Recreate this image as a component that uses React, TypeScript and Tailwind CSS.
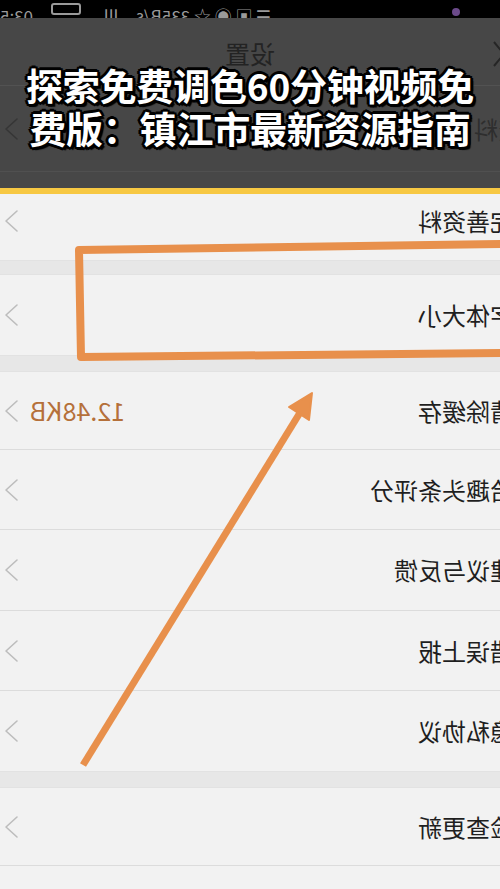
import React from "react"

const font = { fontFamily: '"Noto Sans CJK SC", "Noto Sans", sans-serif' }

// settings rows (the whole screenshot is mirrored, so each label is flipped)
const rows = [
  { label: "字体大小", h: "h-[80px]", bandAfter: true },
  { label: "清除缓存", h: "h-[78px]", value: "12.48KB" },
  { label: "给趣头条评分", h: "h-[80px]" },
  { label: "建议与反馈", h: "h-[81px]" },
  { label: "错误上报", h: "h-[80px]" },
  { label: "隐私协议", h: "h-[80px]", bandAfter: true },
  { label: "检查更新", h: "h-[78px]" },
]

function Chevron({ color = "#bdbdbd" }: { color?: string }) {
  return (
    <svg width="16" height="24" viewBox="0 0 16 24" className="shrink-0">
      <path d="M14 2 L3 12 L14 22" fill="none" stroke={color} strokeWidth="1.6" strokeLinecap="round" strokeLinejoin="round" />
    </svg>
  )
}

function Row({ label, h, value, last }: { label: string; h: string; value?: string; last?: boolean }) {
  return (
    <div className={`flex ${h} items-center overflow-hidden bg-[#f2f2f2] pl-[3px] ${last ? "" : "border-b border-[#dcdcdc]"}`}>
      <Chevron />
      {value && (
        <span className="ml-[11px] -scale-x-100 text-[25px] leading-none text-[#b5703a]" style={font}>
          {value}
        </span>
      )}
      <div className="flex-1" />
      <span className="-mr-[14px] -scale-x-100 whitespace-nowrap text-[24px] text-[#1f1f1f]" style={font}>
        {label}
      </span>
    </div>
  )
}

export default function App() {
  return (
    <div className="relative flex h-[889px] w-[500px] flex-col overflow-hidden bg-[#f2f2f2]" style={font}>
      {/* status bar */}
      <div className="flex h-[18px] items-end gap-[18px] overflow-hidden bg-black pl-0 text-[#9a9a9a]">
        <span className="-scale-x-100 translate-y-[6px] text-[17px] leading-none">03:5</span>
        <span className="mb-[3px] h-[12px] w-[30px] rounded-[3px] border-2 border-[#9a9a9a]" />
        <span className="-scale-x-100 translate-y-[6px] text-[17px] leading-none">lll.</span>
        <span className="-scale-x-100 translate-y-[6px] text-[17px] leading-none">☰ ▣ ◉ ☆ 335B/s</span>
        <div className="flex-1" />
        <span className="mb-[2px] mr-[40px] h-[8px] w-[8px] rounded-full bg-[#6b4a8a]" />
      </div>

      {/* darkened header */}
      <div className="relative h-[170px] bg-[#474747]">
        <div className="flex h-[68px] items-center justify-center border-b border-[#525252] pt-[4px]">
          <span className="-scale-x-100 text-[25px] text-[#232323]">设置</span>
        </div>
        <div className="absolute right-[-6px] top-[22px]">
          <svg width="14" height="28" viewBox="0 0 14 28">
            <path d="M2 2 L12 14 L2 26" fill="none" stroke="#262626" strokeWidth="2" />
          </svg>
        </div>
        <div className="flex h-[86px] items-center overflow-hidden border-b border-[#505050] pl-[3px]">
          <Chevron color="#363636" />
          <div className="flex-1" />
          <span className="-mr-[70px] -scale-x-100 text-[24px] text-[#2e2e2e]">修改资料</span>
        </div>

        {/* headline overlay */}
        <div className="absolute inset-x-0 top-[46px] text-center text-[37px] font-bold leading-[43px] tracking-[-0.2px] text-white [text-shadow:3px_0_0_#000,-3px_0_0_#000,0_3px_0_#000,0_-3px_0_#000,2px_2px_0_#000,-2px_-2px_0_#000,2px_-2px_0_#000,-2px_2px_0_#000,3px_3px_1px_#000]">
          <div>探索免费调色60分钟视频免</div>
          <div>费版：镇江市最新资源指南</div>
        </div>
      </div>

      <div className="h-[6px] bg-[#f7c843]" />

      {/* list */}
      <div className="flex h-[66px] items-center overflow-hidden bg-[#f2f2f2] pb-[12px] pl-[3px]">
        <Chevron />
        <div className="flex-1" />
        <span className="-mr-[14px] -scale-x-100 text-[24px] text-[#1f1f1f]">完善资料</span>
      </div>
      <div className="h-[15px] border-y border-[#e2e2e2] bg-[#e7e7e7]" />
      {rows.map((r) => (
        <React.Fragment key={r.label}>
          <Row label={r.label} h={r.h} value={r.value} last={r.bandAfter} />
          {r.bandAfter && <div className="h-[17px] border-y border-[#e2e2e2] bg-[#e7e7e7]" />}
        </React.Fragment>
      ))}
      <div className="flex-1 bg-[#f2f2f2]" />

      {/* orange annotation: box and arrow */}
      <svg className="pointer-events-none absolute inset-0" width="500" height="889" viewBox="0 0 500 889">
        <path d="M508 244 L79 250 L81 357 L508 353" fill="none" stroke="#e8904c" strokeWidth="8" strokeLinejoin="round" />
        <line x1="83" y1="765" x2="301" y2="411" stroke="#e8904c" strokeWidth="7" />
        <polygon points="312,393 309,420 289,407" fill="#e8904c" stroke="#e8904c" strokeWidth="2" strokeLinejoin="round" />
      </svg>
    </div>
  )
}
